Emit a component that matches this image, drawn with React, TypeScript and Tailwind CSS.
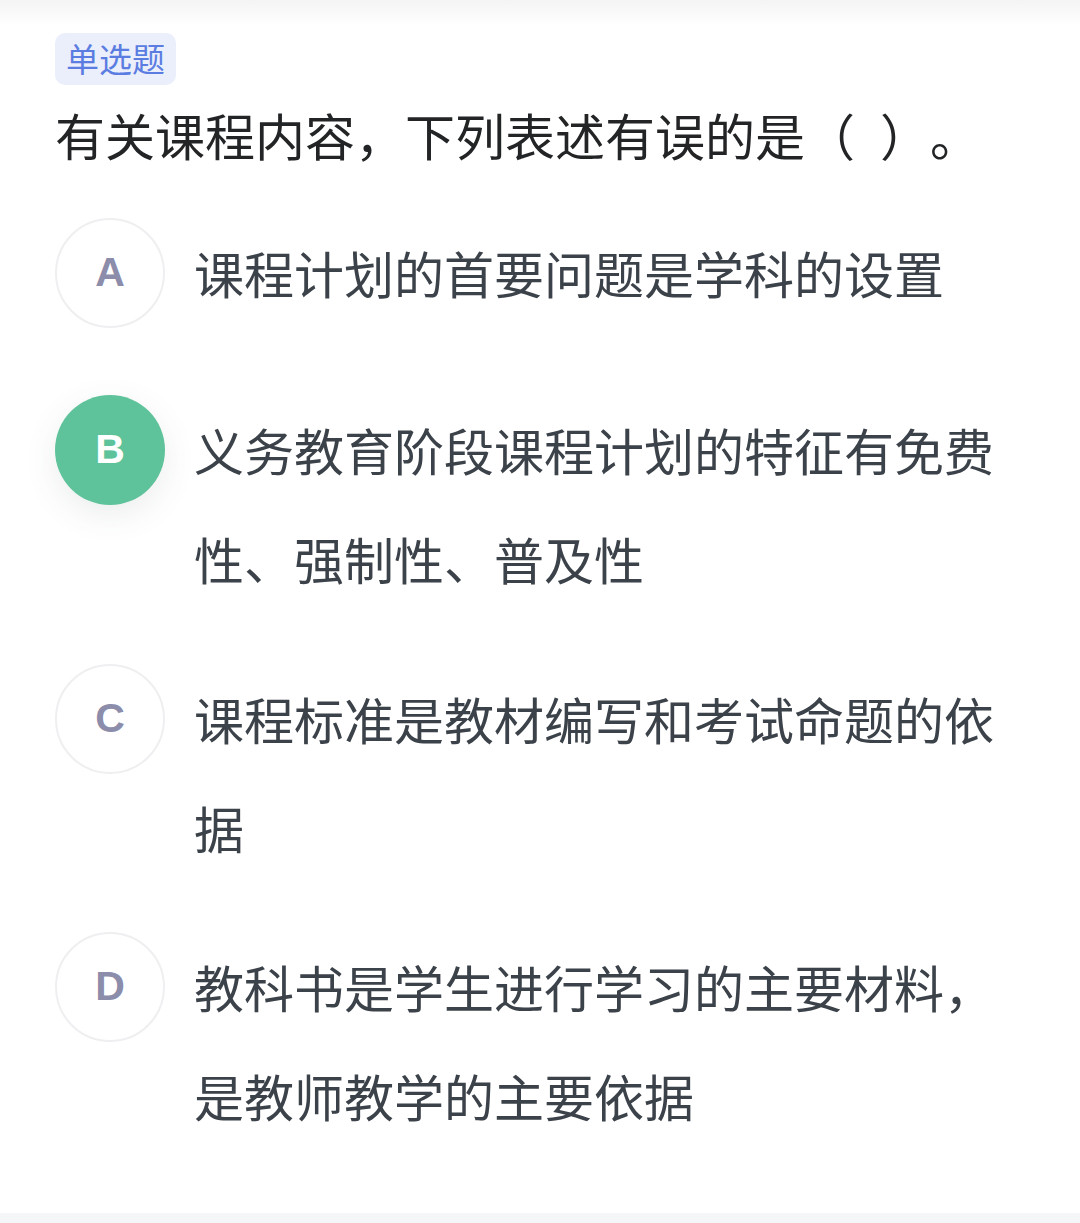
const options = [
  { key: 'A', text: '课程计划的首要问题是学科的设置', gap: 'mt-[48px]' },
  { key: 'B', text: '义务教育阶段课程计划的特征有免费性、强制性、普及性', gap: 'mt-[67px]', selected: true },
  { key: 'C', text: '课程标准是教材编写和考试命题的依据', gap: 'mt-[51px]' },
  { key: 'D', text: '教科书是学生进行学习的主要材料，是教师教学的主要依据', gap: 'mt-[50px]' },
];

function OptionRow({
  letter,
  text,
  gap,
  selected,
}: {
  letter: string;
  text: string;
  gap: string;
  selected?: boolean;
}) {
  return (
    <div className={`flex items-start ${gap}`}>
      <div
        className={`flex h-[110px] w-[110px] shrink-0 items-center justify-center rounded-full text-[41px] font-bold ${
          selected
            ? 'bg-[#5ec39b] text-white shadow-[0_10px_32px_rgba(60,80,70,0.10)]'
            : 'border-2 border-[#efeff2] bg-white text-[#8c8cab]'
        }`}
        style={{ fontFamily: '"Liberation Sans", Arial, sans-serif' }}
      >
        {letter}
      </div>
      <p className="ml-[29px] w-[830px] text-[50px] leading-[109px] text-[#3c4249] [text-spacing-trim:space-all]">
        {text}
      </p>
    </div>
  );
}

export default function App() {
  return (
    <div
      className="flex h-[1223px] w-full flex-col bg-white"
      style={{ fontFamily: '"Noto Sans CJK SC", "Noto Sans", sans-serif' }}
    >
      <div className="h-[26px] bg-gradient-to-b from-[#f4f4f5] to-white" />
      <div className="flex flex-1 flex-col px-[55px]">
        <div className="mt-[7px] flex h-[52px] w-[121px] items-center justify-center rounded-[10px] bg-[#eaeffb] text-[33px] text-[#5b7de2]">
          单选题
        </div>
        <h1 className="mt-[13px] text-[50px] leading-[72px] font-normal text-[#222426] [text-spacing-trim:space-all]">
          有关课程内容，下列表述有误的是（{'\u2002'}）。
        </h1>
        {options.map((o) => (
          <OptionRow key={o.key} letter={o.key} text={o.text} gap={o.gap} selected={o.selected} />
        ))}
      </div>
      <div className="h-[10px] bg-[#f5f6f8]" />
    </div>
  );
}
